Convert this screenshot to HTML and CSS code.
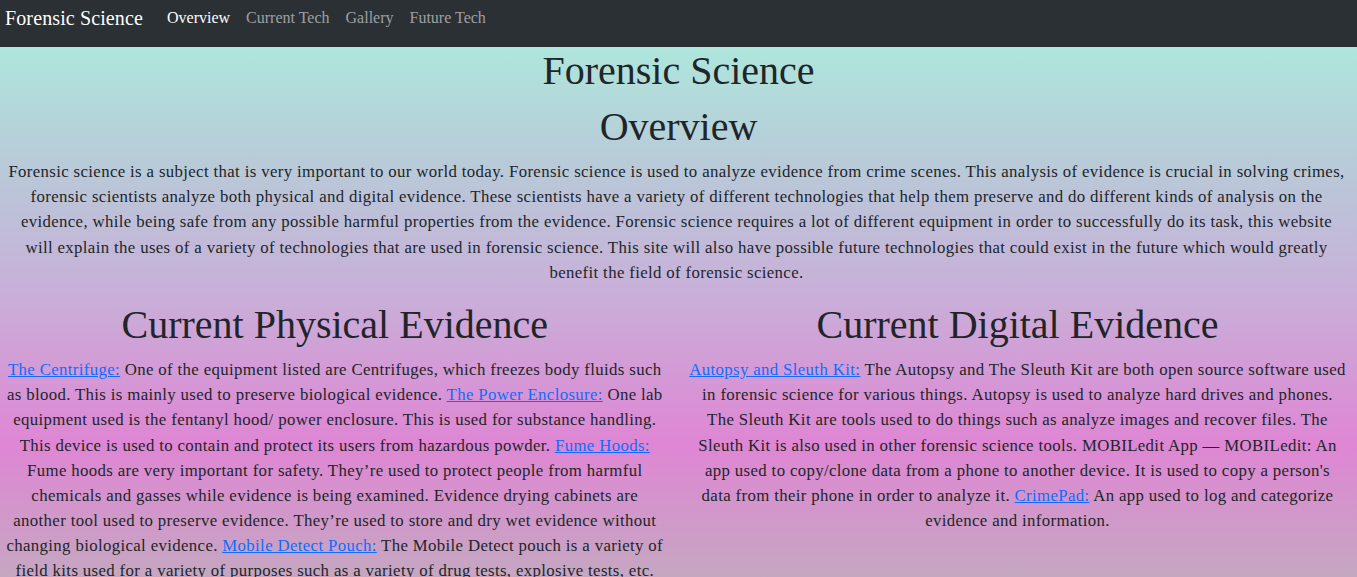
FILE: index.html
```html
<!DOCTYPE html>
<html lang="en">
<head>
<meta charset="utf-8">
<title>Forensic Science</title>
<link rel="stylesheet" href="styles.css">
</head>
<body>
<nav class="navbar">
  <a class="brand" href="#">Forensic Science</a>
  <ul class="nav-links">
    <li><a class="nav-link active" href="#">Overview</a></li>
    <li><a class="nav-link" href="#">Current Tech</a></li>
    <li><a class="nav-link" href="#">Gallery</a></li>
    <li><a class="nav-link" href="#">Future Tech</a></li>
  </ul>
</nav>
<main class="page">
  <h1 class="title">Forensic Science</h1>
  <h1 class="title">Overview</h1>
  <p class="intro">Forensic science is a subject that is very important to our world today. Forensic science is used to analyze evidence from crime scenes. This analysis of evidence is crucial in solving crimes, forensic scientists analyze both physical and digital evidence. These scientists have a variety of different technologies that help them preserve and do different kinds of analysis on the evidence, while being safe from any possible harmful properties from the evidence. Forensic science requires a lot of different equipment in order to successfully do its task, this website will explain the uses of a variety of technologies that are used in forensic science. This site will also have possible future technologies that could exist in the future which would greatly benefit the field of forensic science.</p>
  <div class="row">
    <section class="col col-left">
      <h1 class="title">Current Physical Evidence</h1>
      <p class="text"><a href="#">The Centrifuge:</a> One of the equipment listed are Centrifuges, which freezes body fluids such as blood. This is mainly used to preserve biological evidence. <a href="#">The Power Enclosure:</a> One lab equipment used is the fentanyl hood/ power enclosure. This is used for substance handling. This device is used to contain and protect its users from hazardous powder. <a href="#">Fume Hoods:</a> Fume hoods are very important for safety. They’re used to protect people from harmful chemicals and gasses while evidence is being examined. Evidence drying cabinets are another tool used to preserve evidence. They’re used to store and dry wet evidence without changing biological evidence. <a href="#">Mobile Detect Pouch:</a> The Mobile Detect pouch is a variety of field kits used for a variety of purposes such as a variety of drug tests, explosive tests, etc.</p>
    </section>
    <section class="col col-right">
      <h1 class="title">Current Digital Evidence</h1>
      <p class="text"><a href="#">Autopsy and Sleuth Kit:</a> The Autopsy and The Sleuth Kit are both open source software used in forensic science for various things. Autopsy is used to analyze hard drives and phones. The Sleuth Kit are tools used to do things such as analyze images and recover files. The Sleuth Kit is also used in other forensic science tools. MOBILedit App — MOBILedit: An app used to copy/clone data from a phone to another device. It is used to copy a person's data from their phone in order to analyze it. <a href="#">CrimePad:</a> An app used to log and categorize evidence and information.</p>
    </section>
  </div>
</main>
</body>
</html>
```

FILE: styles.css
```css
html, body {
  margin: 0;
  padding: 0;
}

body {
  font-family: "Liberation Serif", "Times New Roman", serif;
  color: #212529;
  background: linear-gradient(180deg,
    #aee6dc 47px,
    #b9c9d8 170px,
    #c9aed8 300px,
    #df86d4 445px,
    #c5a7c1 577px,
    #bcaebb 800px);
  background-repeat: no-repeat;
  background-color: #bcaebb;
  min-height: 100vh;
}

.navbar {
  display: flex;
  align-items: flex-start;
  height: 47px;
  box-sizing: border-box;
  padding-left: 5px;
  background: #2b3035;
}

.brand {
  font-size: 20px;
  line-height: 30px;
  margin-top: 3px;
  margin-right: 16px;
  color: #fff;
  text-decoration: none;
  white-space: nowrap;
  letter-spacing: 0.12px;
}

.nav-links {
  display: flex;
  list-style: none;
  margin: 6px 0 0;
  padding: 0;
}

.nav-link {
  display: block;
  font-size: 16px;
  line-height: 24px;
  padding: 0 8px;
  color: rgba(255, 255, 255, 0.55);
  text-decoration: none;
}

.nav-link.active {
  color: #fff;
}

.page {
  text-align: center;
  padding: 0 12px;
}

.title {
  font-size: 40px;
  font-weight: 400;
  line-height: 1.2;
  margin: 0 0 8px;
}

.intro,
.text {
  font-size: 16.8px;
  line-height: 1.5;
  letter-spacing: 0.36px;
  margin: 0 0 16px;
}

.intro {
  margin-left: -4.5px;
  margin-right: -0.5px;
}

.row {
  display: flex;
  margin: 0 -12px;
}

.col {
  flex: 0 0 50%;
  box-sizing: border-box;
  min-width: 0;
}

.col-left {
  padding: 0 15px 0 6px;
}

.col-right {
  padding: 0 11px 0 10.5px;
}

a {
  color: #0d6efd;
  text-decoration: underline;
}
```
